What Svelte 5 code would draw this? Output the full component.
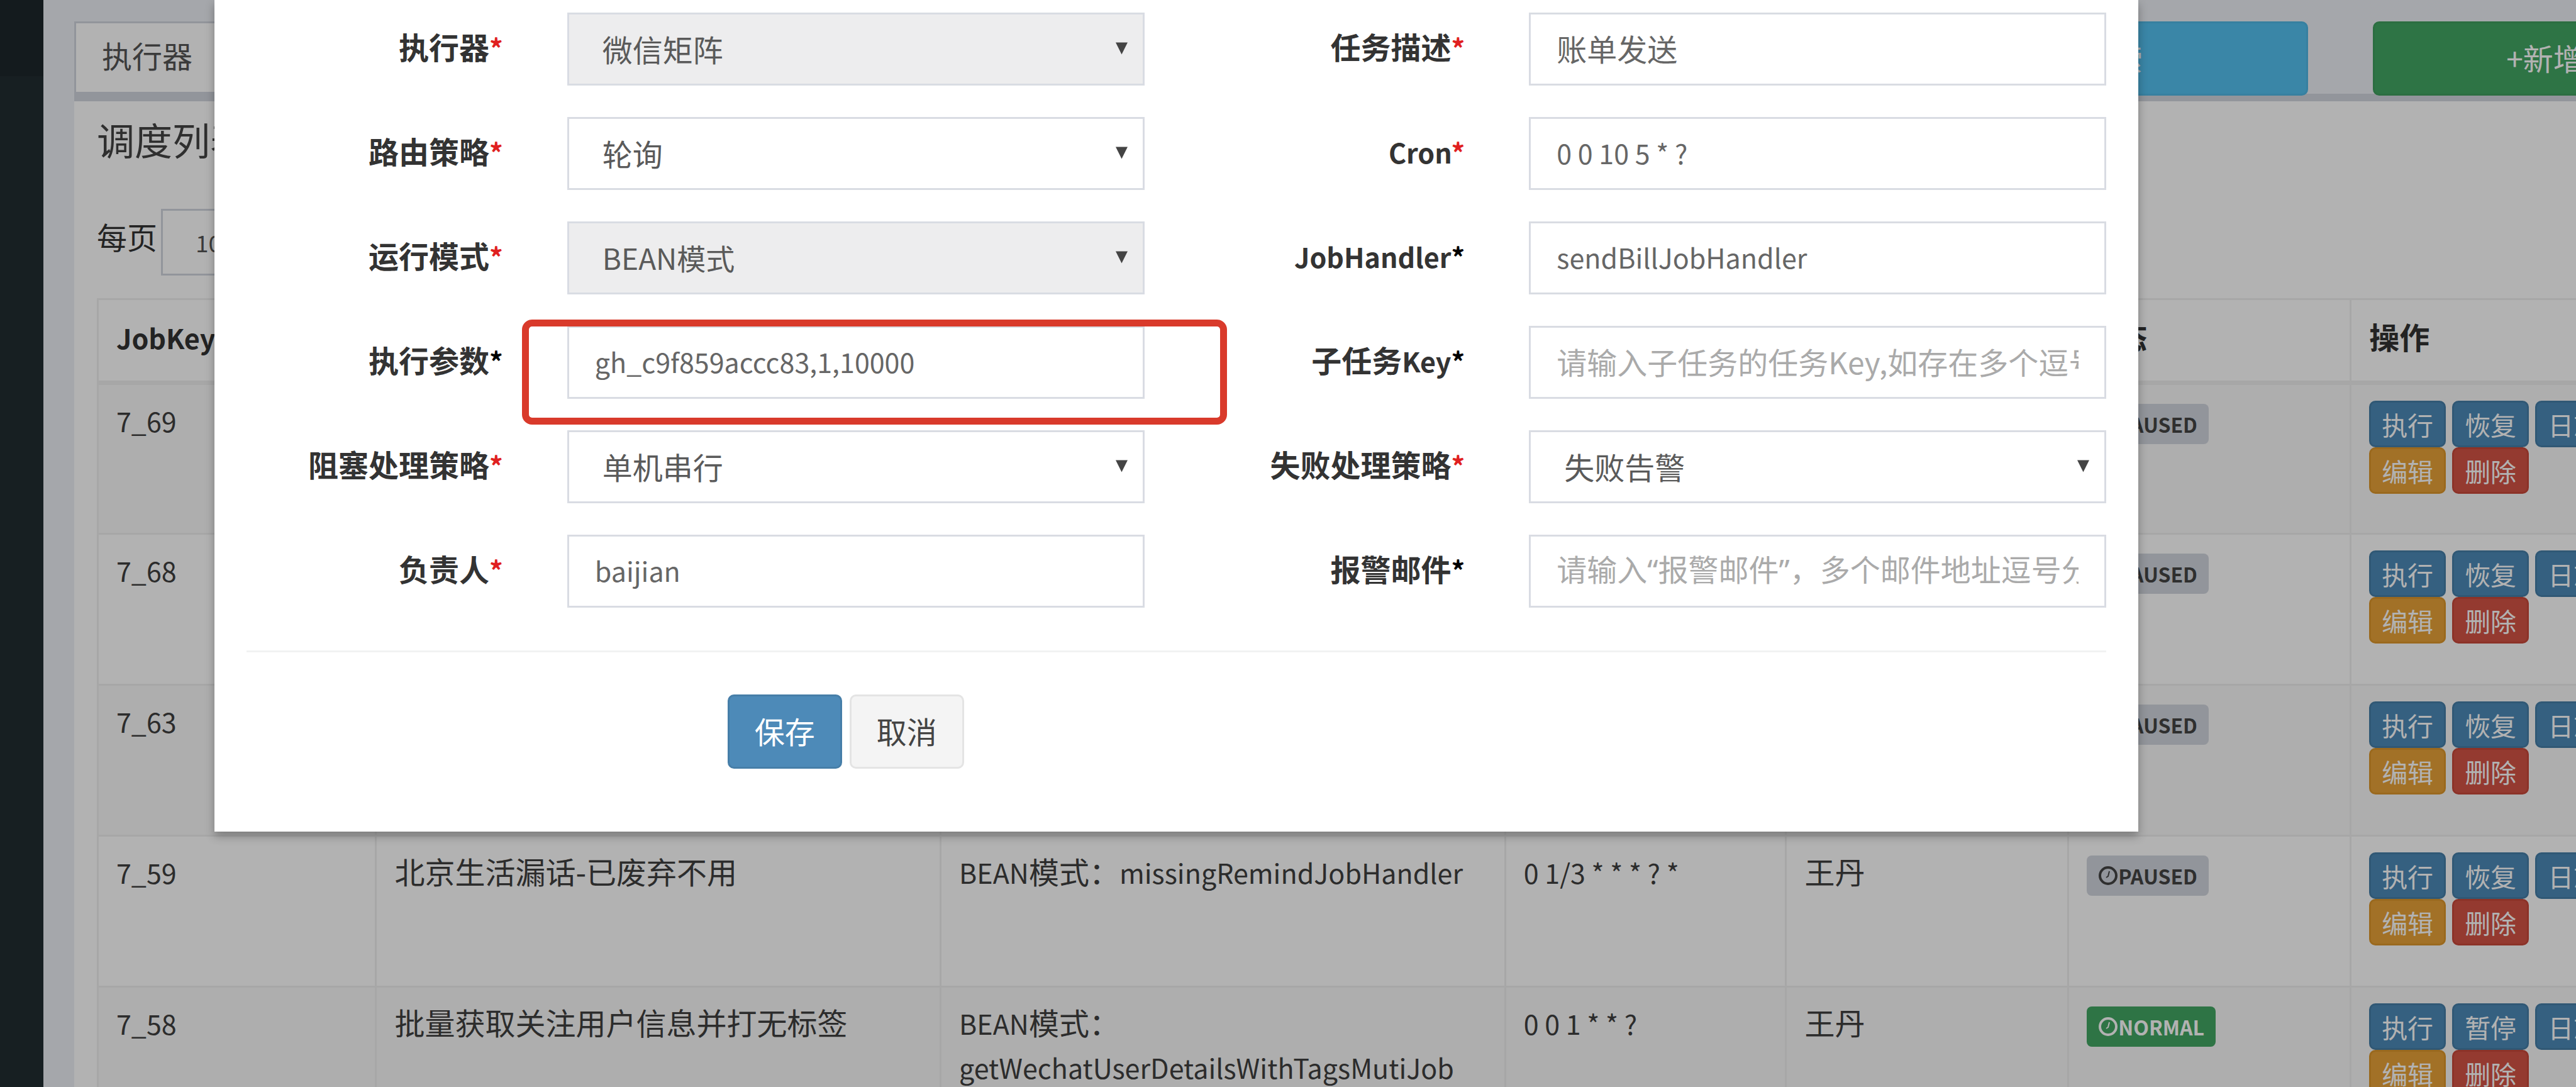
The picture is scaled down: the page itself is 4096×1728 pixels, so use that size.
<script>
  const modeLabel = 'BEAN';
  const columns = [
    { name: 'key', title: 'JobKey', latin: true },
    { name: 'desc', title: '描述' },
    { name: 'mode', title: '运行模式' },
    { name: 'cron', title: 'Cron', latin: true },
    { name: 'owner', title: '负责人' },
    { name: 'state', title: '状态' },
    { name: 'ops', title: '操作' }
  ];
  const jobs = [
    { key: '7_69', state: 'PAUSED' },
    { key: '7_68', state: 'PAUSED' },
    { key: '7_63', state: 'PAUSED' },
    { key: '7_59', desc: '北京生活漏话-已废弃不用', handler: 'missingRemindJobHandler', cron: '0 1/3 * * * ? *', owner: '王丹', state: 'PAUSED' },
    { key: '7_58', desc: '批量获取关注用户信息并打无标签', handler: 'getWechatUserDetailsWithTagsMutiJob', cron: '0 0 1 * * ?', owner: '王丹', state: 'NORMAL' }
  ];
  const fields = [
    { id: 'group', cjk: '执行器', required: true, kind: 'select', value: '微信矩阵', disabled: true },
    { id: 'desc', cjk: '任务描述', required: true, value: '账单发送', wide: true },
    { id: 'route', cjk: '路由策略', required: true, kind: 'select', value: '轮询' },
    { id: 'cron', latin: 'Cron', required: true, value: '0 0 10 5 * ?' },
    { id: 'glue', cjk: '运行模式', required: true, kind: 'select', value: 'BEAN模式', disabled: true, mixed: true },
    { id: 'handler', latin: 'JobHandler', value: 'sendBillJobHandler' },
    { id: 'param', cjk: '执行参数', value: 'gh_c9f859accc83,1,10000', marked: true },
    { id: 'child', cjk: '子任务', latin: 'Key', placeholder: '请输入子任务的任务Key,如存在多个逗号分隔', value: '', wide: true },
    { id: 'block', cjk: '阻塞处理策略', required: true, kind: 'select', value: '单机串行' },
    { id: 'fail', cjk: '失败处理策略', required: true, kind: 'select', value: '失败告警' },
    { id: 'author', cjk: '负责人', required: true, value: 'baijian' },
    { id: 'mail', cjk: '报警邮件', placeholder: '请输入“报警邮件”，多个邮件地址逗号分隔', value: '', wide: true, quoted: true }
  ];
</script>

<div class="screen">
  <aside class="sidebar"><div class="active"></div></aside>
  <main class="content">
    <div class="toolbar">
      <div class="addon">执行器</div>
      <div class="actions">
        <button type="button" class="btn info">搜索</button>
        <button type="button" class="btn success">+新增任务</button>
      </div>
    </div>
    <section class="box">
      <h3>调度列表</h3>
      <div class="pager">
        <label for="page-size">每页</label>
        <select id="page-size"><option>10</option></select>
      </div>
      <table>
        <colgroup>
          {#each columns as c}<col class={c.name} />{/each}
        </colgroup>
        <thead>
          <tr>
            {#each columns as c}<th><span class:latin={c.latin}>{c.title}</span></th>{/each}
          </tr>
        </thead>
        <tbody>
          {#each jobs as job}
            <tr>
              <td><span class="latin">{job.key}</span></td>
              <td>{job.desc ?? ''}</td>
              <td>{#if job.handler}<span class="latin">{modeLabel}</span>模式：<span class="latin">{job.handler}</span>{/if}</td>
              <td><span class="latin">{job.cron ?? ''}</span></td>
              <td>{job.owner ?? ''}</td>
              <td>
                <span class="badge" class:normal={job.state === 'NORMAL'}>
                  <svg viewBox="0 0 32 32" aria-hidden="true"><circle cx="16" cy="16" r="13" /><path d="M18 9L16 17L13 19" /></svg>{job.state}
                </span>
              </td>
              <td>
                <div class="ops">
                  <button type="button" class="xs">执行</button>
                  <button type="button" class="xs">{job.state === 'NORMAL' ? '暂停' : '恢复'}</button>
                  <button type="button" class="xs">日志</button>
                </div>
                <div class="ops">
                  <button type="button" class="xs warning">编辑</button>
                  <button type="button" class="xs danger">删除</button>
                </div>
              </td>
            </tr>
          {/each}
        </tbody>
      </table>
    </section>
  </main>

  <div class="backdrop"></div>
  <div class="modal" role="dialog" aria-modal="true">
    <form onsubmit={(e) => e.preventDefault()}>
      <div class="fields">
        {#each fields as f}
          <label for={f.id}>{f.cjk ?? ''}<span class="latin">{f.latin ?? ''}</span><span class="star latin" class:required={f.required}>*</span></label>
          <div class="control">
            {#if f.kind === 'select'}
              <select id={f.id} class:mixed={f.mixed} disabled={f.disabled}><option>{f.value}</option></select>
              <svg class="arrow" viewBox="0 0 20 20" aria-hidden="true"><path d="M0 0H20L10 20Z" /></svg>
            {:else}
              <input id={f.id} type="text" class:wide={f.wide} class:quoted={f.quoted} value={f.value} placeholder={f.placeholder} />
            {/if}
            {#if f.marked}<span class="mark"></span>{/if}
          </div>
        {/each}
      </div>
      <hr />
      <div class="submit">
        <button type="submit" class="btn primary">保存</button>
        <button type="button" class="btn default">取消</button>
      </div>
    </form>
  </div>
</div>

<style>
  :global(body) { margin: 0; background: #ecf0f5; }
  * { box-sizing: border-box; }
  .screen {
    position: relative;
    display: flex;
    height: 100vh;
    overflow: hidden;
    font: 48px/68px "Noto Sans CJK SC", sans-serif;
    color: #333;
  }
  button, input, select { font: inherit; margin: 0; }
  .latin { font-size: 43px; }
  .sidebar { flex: none; width: 69px; background: #222d32; }
  .active { height: 121px; background: #1e282c; }
  .content { flex: 1; min-width: 0; padding: 34px 0 0 49px; background: #ecf0f5; }

  .toolbar { display: flex; justify-content: space-between; height: 115px; }
  .addon {
    width: 300px;
    padding: 16px 41px;
    border: 3px solid #d2d6de;
    background: #fff;
    color: #555;
  }
  .actions { display: flex; gap: 103px; margin-right: -320px; height: 118px; }
  .btn { border: 3px solid transparent; border-radius: 10px; padding: 0 40px 5px; height: 118px; color: #fff; }
  .info { width: 622px; background: #53c1f0; border-color: #4fb8e5; }
  .success { width: 643px; background: #43a763; border-color: #3f9e5d; }

  .box { border-top: 12px solid #d2d6de; background: #fff; min-height: 100vh; padding: 26px 0 0 36px; }
  h3 { margin: 0; font-size: 60px; line-height: 68px; font-weight: 400; color: #444; }
  .pager { display: flex; align-items: flex-start; gap: 6px; margin: 77px 0 36px; height: 106px; }
  .pager label { padding-top: 9px; }
  .pager select {
    appearance: none;
    width: 260px;
    height: 106px;
    padding: 0 52px;
    border: 3px solid #d2d6de;
    border-radius: 0;
    background: #fff;
    color: #555;
    font-size: 37px;
  }

  table { width: 108%; table-layout: fixed; border-collapse: collapse; }
  col.key { width: 10.4%; }
  col.cron { width: 10.5%; }
  col.desc, col.mode { width: 21.1%; }
  col.owner, col.state { width: 10.55%; }
  th, td { border: 3px solid #f0f0f0; padding: 20px 28px 0; text-align: left; vertical-align: top; }
  th { border-bottom-width: 7px; padding: 23px 28px 35px; font-weight: 700; }
  td { height: 240px; color: #404040; }
  tbody tr:nth-child(odd) { background: #f9f9f9; }

  .badge {
    display: inline-flex;
    align-items: center;
    height: 64px;
    margin-top: 10px;
    padding: 0 18px;
    border-radius: 8px;
    background: #d2d6de;
    color: #444;
    font-size: 32px;
    line-height: 64px;
    font-weight: 700;
  }
  .badge svg { width: 32px; height: 32px; fill: none; stroke: currentColor; stroke-width: 4; }
  .badge path { stroke-width: 2; }
  .badge.normal { background: #43a763; color: #fff; }

  .ops { display: flex; gap: 10px; }
  .ops:first-child { margin-top: 5px; }
  .xs {
    flex: none;
    height: 74px;
    padding: 0 17px;
    border: 3px solid #467ea8;
    border-radius: 10px;
    background: #4d8ab8;
    color: #fff;
    font-size: 41px;
    line-height: 60px;
  }
  .warning { background: #e9a339; border-color: #dd972c; }
  .danger { background: #d55345; border-color: #c9483a; }

  .backdrop { position: absolute; inset: 0; background: rgba(0, 0, 0, 0.3); }
  .modal {
    position: absolute;
    top: 0;
    left: 341px;
    right: 696px;
    padding: 20px 0 100px;
    background: #fff;
    box-shadow: 0 7px 14px rgba(0, 0, 0, 0.3);
  }
  .fields { display: grid; grid-template-columns: 1fr 2fr 1fr 2fr; row-gap: 50px; }
  .fields label { padding: 19px 51px 0 0; text-align: right; font-weight: 700; white-space: nowrap; }
  .star { color: #000; }
  .star.required { color: #e02020; }
  .control { position: relative; margin: 0 51px; }
  .control select, .control input {
    display: block;
    appearance: none;
    width: 100%;
    height: 116px;
    padding: 0 41px 5px;
    border: 3px solid #d9dce3;
    border-radius: 0;
    background: #fff;
    color: #666;
    opacity: 1;
  }
  .control input { font-size: 43px; }
  .control input.wide { font-size: 48px; }
  .control input.quoted { font-family: "Noto Sans", "Noto Sans CJK SC", sans-serif; }
  .control input::placeholder { color: #aaa; opacity: 1; }
  .control select { padding: 0 53px 2px; color: #5a5a5a; }
  .control select.mixed { font-size: 46px; }
  .control select:disabled { background: #ededee; }
  .arrow { position: absolute; right: 27px; top: 47px; width: 19px; height: 20px; fill: #444; }
  .mark {
    position: absolute;
    inset: -10px -131px -41px -72px;
    border: 11px solid #d93a2b;
    border-radius: 16px;
    pointer-events: none;
  }
  hr { margin: 68px 51px 67px; border: 0; border-top: 3px solid #f1f2f2; }
  .submit { display: flex; gap: 12px; margin-left: 25%; padding-left: 51px; }
  .primary { background: #4d8ab8; border-color: #467ea8; }
  .default { background: #f4f4f4; border-color: #e4e4e4; color: #444; }
</style>
